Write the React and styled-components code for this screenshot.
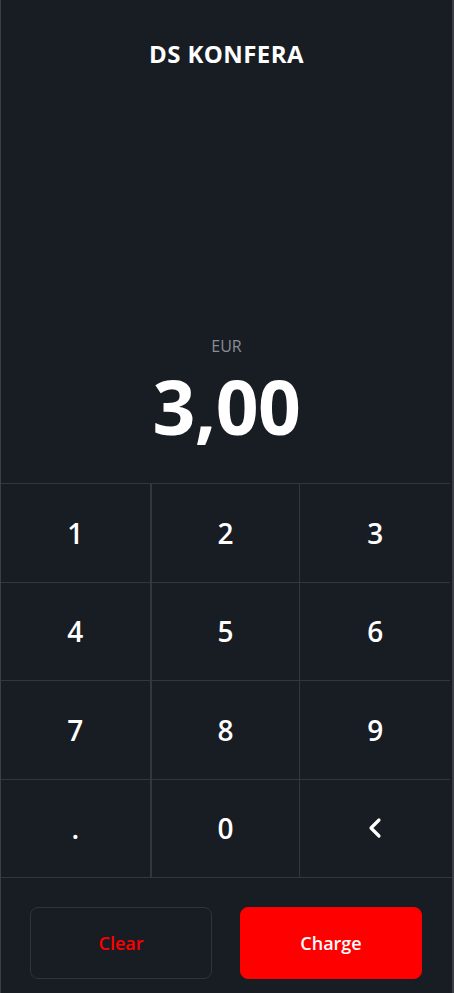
import styled, { createGlobalStyle } from 'styled-components'

const Global = createGlobalStyle`
html, body { margin: 0; padding: 0; background: #181c23; }
body { font-family: "Open Sans", "Liberation Sans", sans-serif; }
* { box-sizing: border-box; }
`

const Screen = styled.div`
display: flex;
flex-direction: column;
height: 100vh;
background: #181c23;
border-left: 1px solid #3c3f46;
border-right: 2px solid #3c3f46;
color: #fff;
`

const Title = styled.h1`
margin: 0;
padding-top: 37px;
text-align: center;
font-size: 24px;
line-height: 34px;
font-weight: 700;
letter-spacing: 0.4px;
`

const Display = styled.div`
flex: 1;
display: flex;
flex-direction: column;
justify-content: flex-end;
align-items: center;
padding-bottom: 26px;
`

const Currency = styled.span`
font-size: 16px;
line-height: 22px;
color: #8b8e94;
transform: translateY(2px);
`

const Amount = styled.span`
font-size: 75px;
line-height: 102px;
font-weight: 700;
letter-spacing: -0.5px;
`

const Pad = styled.div`
display: grid;
grid-template-columns: repeat(3, 1fr);
grid-auto-rows: 98.5px;
margin-right: 2px;
`

const Key = styled.button`
display: flex;
align-items: center;
justify-content: center;
background: transparent;
border: 0;
border-top: 1px solid #33363d;
border-left: ${p => (p.$col === 1 ? '1px solid #33363d' : '0')};
border-right: ${p => (p.$col === 2 ? '0' : '1px solid #33363d')};
color: #fff;
font-family: inherit;
font-size: 28px;
font-weight: 600;
padding: 0;
cursor: pointer;
`

const Footer = styled.div`
display: grid;
grid-template-columns: 1fr 1fr;
gap: 28px;
padding: 29px 30px 14px 29px;
border-top: 1px solid #33363d;
`

const Action = styled.button`
height: 72px;
border-radius: 8px;
font-family: inherit;
font-size: 18px;
font-weight: 600;
cursor: pointer;
border: 1px solid ${p => (p.$primary ? '#ff0000' : '#2f333a')};
background: ${p => (p.$primary ? '#ff0000' : 'transparent')};
color: ${p => (p.$primary ? '#fff' : '#ff0000')};
`

const Back = () => (
  <svg width="16" height="22" viewBox="0 0 16 22" fill="none">
    <polyline points="12,3 4,11 12,19" stroke="#fff" strokeWidth="3.2" strokeLinecap="round" strokeLinejoin="round" />
  </svg>
)

const keys = ['1', '2', '3', '4', '5', '6', '7', '8', '9', '.', '0', 'back']

export default function App() {
  return (
    <>
      <Global />
      <Screen>
        <Title>DS KONFERA</Title>
        <Display>
          <Currency>EUR</Currency>
          <Amount>3,00</Amount>
        </Display>
        <Pad>
          {keys.map((k, i) => (
            <Key key={k} $col={i % 3}>
              {k === 'back' ? <Back /> : k}
            </Key>
          ))}
        </Pad>
        <Footer>
          <Action>Clear</Action>
          <Action $primary>Charge</Action>
        </Footer>
      </Screen>
    </>
  )
}
